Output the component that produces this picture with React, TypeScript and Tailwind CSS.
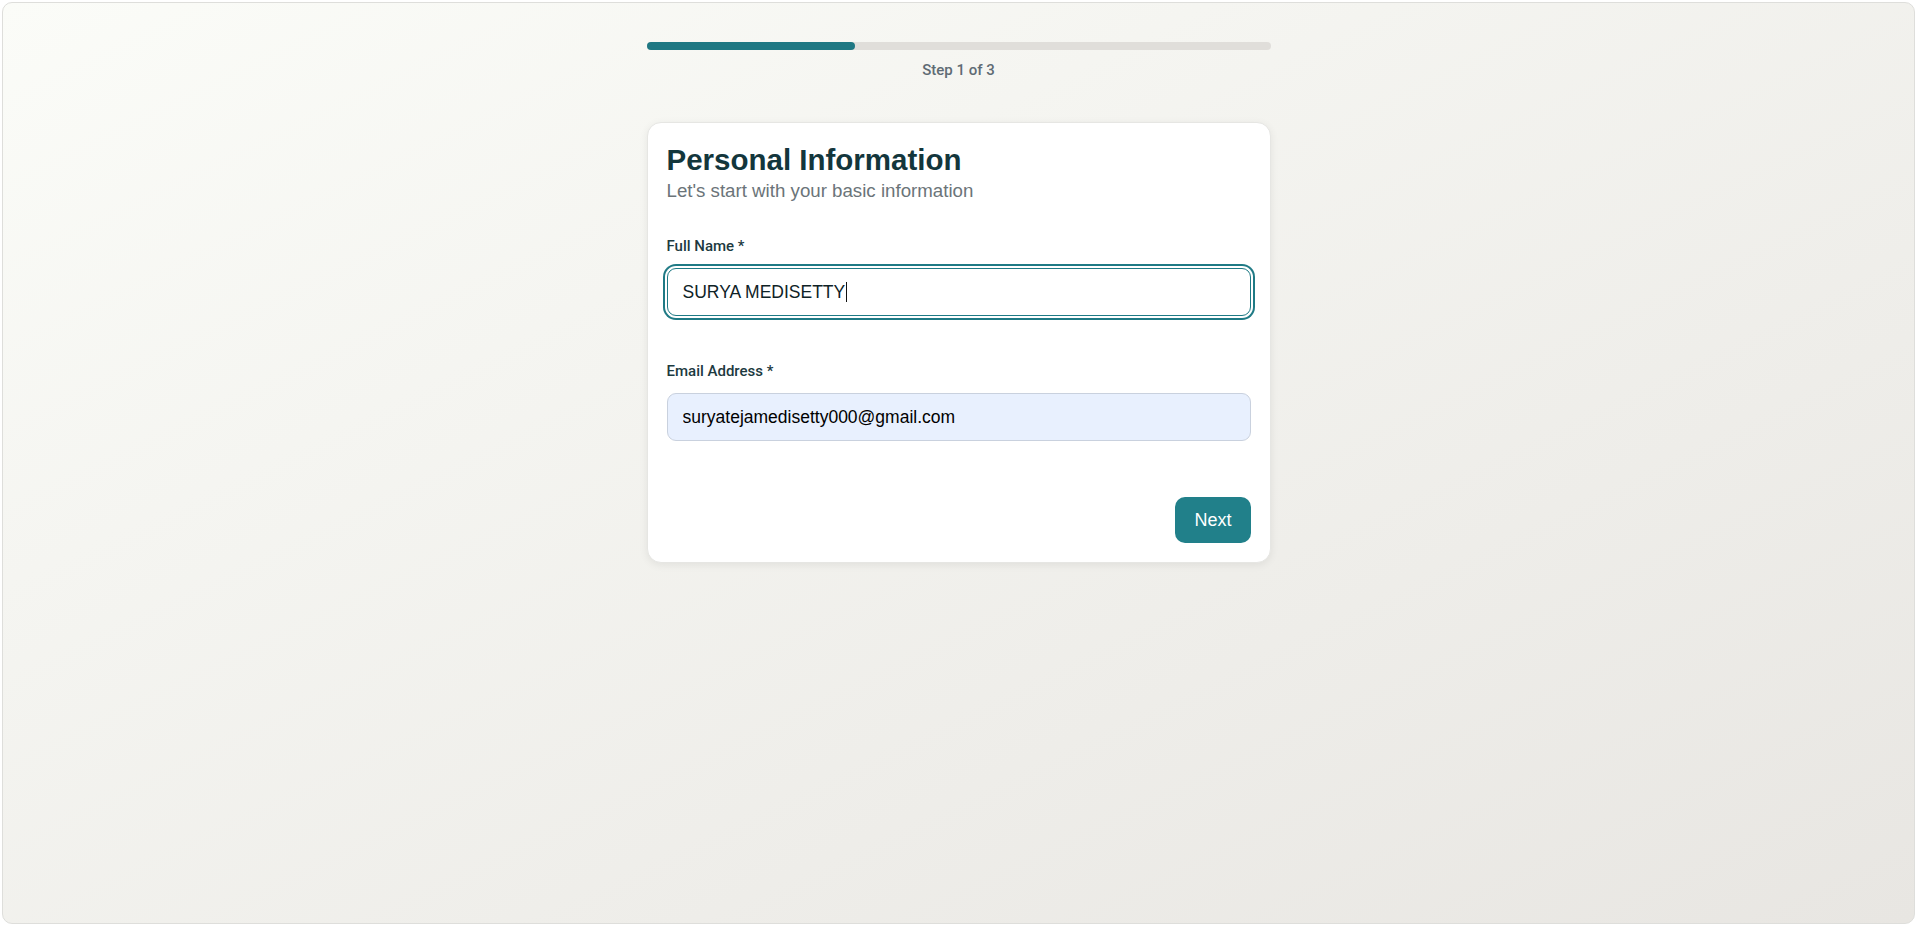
import { useState } from "react";

function Field({
  label,
  children,
  className,
}: {
  label: string;
  children: React.ReactNode;
  className?: string;
}) {
  return (
    <div className={className}>
      <label className="block font-['Roboto',Arial,sans-serif] text-[15px] leading-5 font-medium text-[#1d3a3f]">
        {label}
      </label>
      <div className="mt-3">{children}</div>
    </div>
  );
}

export default function App() {
  const [email, setEmail] = useState("suryatejamedisetty000@gmail.com");
  const step = 1;
  const total = 3;

  return (
    <div className="h-screen bg-white p-[2px] font-['Liberation_Sans',Arial,sans-serif]">
      <div className="h-full rounded-[10px] border border-[#dededb] bg-gradient-to-br from-[#fbfcf8] to-[#e8e6e2]">
        <div className="mx-auto w-[624px] pt-[39px]">
          {/* progress */}
          <div className="h-2 rounded-full bg-[#e0deda]">
            <div
              className="h-full rounded-full bg-[#1f7883]"
              style={{ width: `${(step / total) * 100}%` }}
            />
          </div>
          <p className="mt-[10px] text-center font-['Roboto',Arial,sans-serif] text-[15px] leading-5 font-medium text-[#5f6b74]">
            Step {step} of {total}
          </p>

          {/* card */}
          <div className="mt-[42px] rounded-[14px] border border-[#e6e6e3] bg-white px-[19px] pt-[19px] pb-[19px] shadow-[0_2px_8px_rgba(0,0,0,0.07)]">
            <h2 className="text-[29.5px] leading-9 font-bold text-[#13363c]">
              Personal Information
            </h2>
            <p className="text-[18.7px] leading-[26px] text-[#6b7479]">
              Let's start with your basic information
            </p>

            <Field label="Full Name *" className="mt-8">
              <div className="flex h-12 items-center rounded-[9px] border border-[#1f7a85] bg-white px-[15px] text-[17.5px] text-[#0e2226] ring-2 ring-[#1f7a85] ring-offset-2">
                <span>SURYA MEDISETTY</span>
                <span className="ml-px h-5 w-px bg-[#111]" />
              </div>
            </Field>

            <Field label="Email Address *" className="mt-[45px]">
              <input
                type="email"
                value={email}
                onChange={(e) => setEmail(e.target.value)}
                className="h-12 w-full rounded-[9px] border border-[#c9d1de] bg-[#e8f0fe] px-[15px] text-[17.5px] text-black outline-none"
              />
            </Field>

            <div className="mt-[56px] flex justify-end">
              <button className="h-[46px] rounded-[10px] bg-[#21808a] px-[19px] text-[18px] text-white hover:bg-[#1b6e77]">
                Next
              </button>
            </div>
          </div>
        </div>
      </div>
    </div>
  );
}
